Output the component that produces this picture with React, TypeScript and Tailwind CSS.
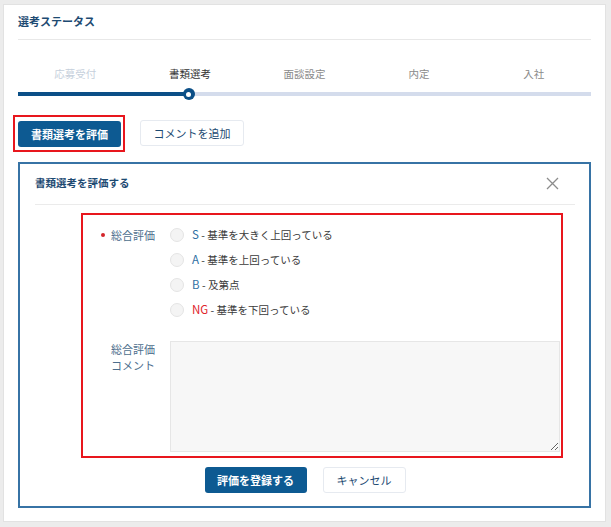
import React from "react";

const font = { fontFamily: '"Noto Sans CJK JP", "Noto Sans", sans-serif' };

const steps = [
  { label: "応募受付", cls: "text-[#c6d0dc]" },
  { label: "書類選考", cls: "text-[#333333]" },
  { label: "面談設定", cls: "text-[#8a8a8a]" },
  { label: "内定", cls: "text-[#8a8a8a]" },
  { label: "入社", cls: "text-[#8a8a8a]" },
];

const options = [
  { grade: "S", color: "text-[#2f6fa3]", text: " - 基準を大きく上回っている" },
  { grade: "A", color: "text-[#2f6fa3]", text: " - 基準を上回っている" },
  { grade: "B", color: "text-[#2f6fa3]", text: " - 及第点" },
  { grade: "NG", color: "text-[#e0242b]", text: " - 基準を下回っている" },
];

export default function App() {
  return (
    <div className="w-[611px] h-[527px] bg-[#ececec] pt-[4px] pl-[3px]" style={font}>
      <div className="w-[603px] h-[518px] bg-white border border-[#e2e2e2] px-[14px] pt-[8px]">
        <div className="h-[16px] leading-[16px] text-[11px] font-bold text-[#1d4a72]">選考ステータス</div>
        <div className="mt-[10px] h-px bg-[#e8e8e8]" />
        <div className="mt-[26px] grid grid-cols-5">
          {steps.map((s) => (
            <div key={s.label} className={`h-[16px] leading-[16px] text-[10.5px] text-center ${s.cls}`}>
              {s.label}
            </div>
          ))}
        </div>
        <div className="mt-[6px] relative h-[12px] flex items-center">
          <div className="h-[4px] w-full bg-[#d4dcec] flex">
            <div className="h-full w-[30%] bg-[#0b4f87]" />
          </div>
          <div className="absolute left-[30%] top-0 -ml-[7px] w-[12px] h-[12px] rounded-full bg-[#0b4f87] flex items-center justify-center">
            <div className="w-[5px] h-[5px] rounded-full bg-white" />
          </div>
        </div>
        <div className="mt-[20px] flex gap-[19px]">
          <div className="relative">
            <button className="w-[103px] h-[26px] rounded-[3px] bg-[#0d5a92] text-white text-[11px] font-bold">
              書類選考を評価
            </button>
            <span className="absolute left-[-5px] right-[-4px] top-[-5px] bottom-[-5px] border-2 border-[#e8161d] pointer-events-none" />
          </div>
          <button className="w-[104px] h-[26px] rounded-[3px] bg-white border border-[#e6eaf0] text-[#1d4a72] text-[11px]">
            コメントを追加
          </button>
        </div>
        <div className="mt-[15px] border-2 border-[#3773a5] pl-[15px] pr-[14px] pt-[11px] pb-[13px]">
          <div className="h-[16px] flex items-center justify-between">
            <div className="leading-[16px] text-[10.5px] font-bold text-[#1d4a72]">書類選考を評価する</div>
            <svg width="13" height="13" viewBox="0 0 13 13" className="mr-[16px]">
              <path d="M1 1 L12 12 M12 1 L1 12" stroke="#8c8c8c" strokeWidth="1.3" fill="none" />
            </svg>
          </div>
          <div className="mt-[13px] h-px bg-[#ebebeb]" />
          <div className="mt-[8px] ml-[46px] mr-[12px] border-2 border-[#e8161d] pt-[7px] pb-[4px] pr-[1px]">
            <div className="flex">
              <div className="w-[72px] h-[25px] flex items-center justify-end gap-[6px] text-[11px] text-[#4d6e8d]">
                <span className="w-[4px] h-[4px] rounded-full bg-[#d4252b]" />
                <span>総合評価</span>
              </div>
              <div className="ml-[15px] flex flex-col">
                {options.map((o) => (
                  <div key={o.grade} className="h-[25px] flex items-center">
                    <span className="w-[14px] h-[14px] rounded-full bg-[#f4f4f4] border border-[#e4e4e4]" />
                    <span className="ml-[8px] text-[10.5px] text-[#3a3a3a]">
                      <span className={`${o.color} text-[11.5px]`}>{o.grade}</span>
                      {o.text}
                    </span>
                  </div>
                ))}
              </div>
            </div>
            <div className="mt-[19px] flex">
              <div className="w-[72px] text-right text-[11px] leading-[16px] text-[#4d6e8d]">
                総合評価
                <br />
                コメント
              </div>
              <textarea className="ml-[15px] flex-1 h-[111px] bg-[#f7f7f7] border border-[#e6e6e6] outline-none resize-y" />
            </div>
          </div>
          <div className="mt-[9px] flex justify-center gap-[16px]">
            <button className="w-[102px] h-[26px] rounded-[3px] bg-[#0d5a92] text-white text-[11px] font-bold">
              評価を登録する
            </button>
            <button className="w-[83px] h-[26px] rounded-[3px] bg-white border border-[#e6eaf0] text-[#1d4a72] text-[11px]">
              キャンセル
            </button>
          </div>
        </div>
      </div>
    </div>
  );
}
